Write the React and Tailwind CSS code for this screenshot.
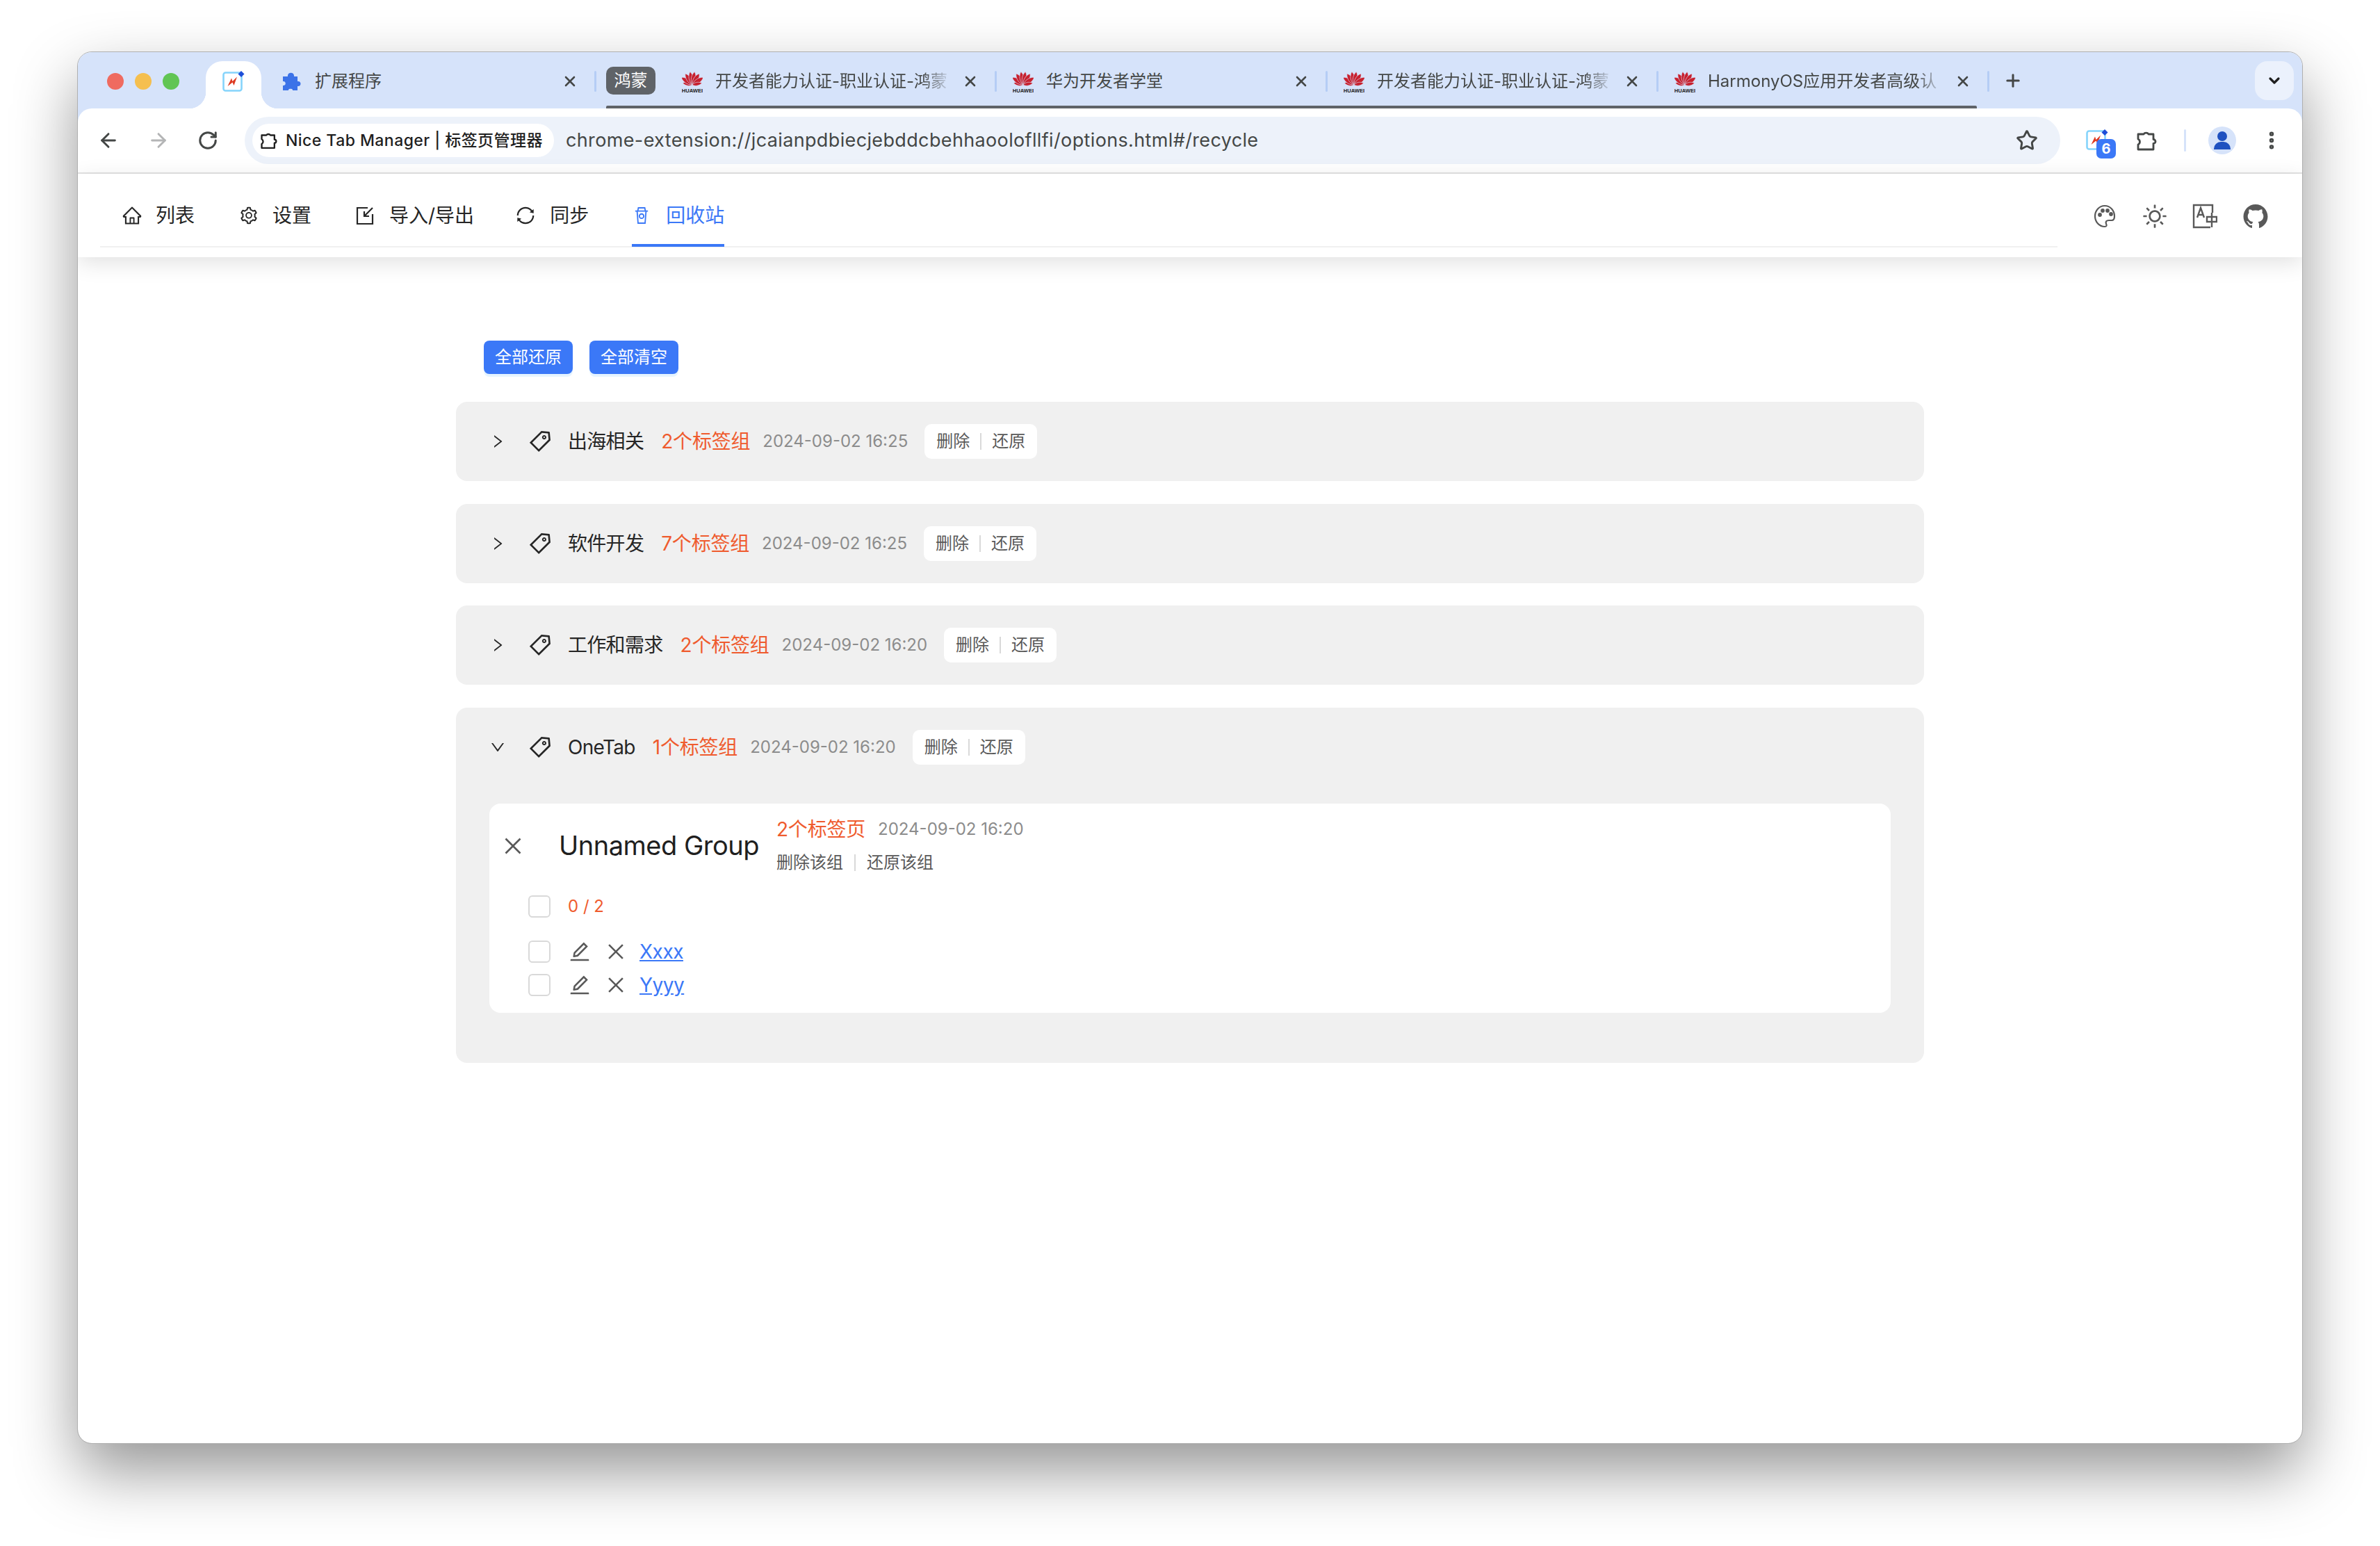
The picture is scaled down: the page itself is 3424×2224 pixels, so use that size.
import { ArrowLeft, ArrowRight, RotateCw, Star, EllipsisVertical, Plus, X, ChevronDown } from 'lucide-react';
import {
  AiOutlineHome,
  AiOutlineSetting,
  AiOutlineSync,
  AiOutlineTag,
  AiOutlineClose,
  AiOutlineEdit,
  AiOutlineRight,
  AiOutlineDown,
  AiOutlineSun,
  AiFillGithub,
} from 'react-icons/ai';

const petalLong = 'M15 21 C10.5 15 11 7 15 2 C19 7 19.5 15 15 21Z';
const petalShort = 'M15 21 C11.5 17 12 11 15 7 C18 11 18.5 17 15 21Z';

const HuaweiLogo = () => (
  <svg viewBox="0 0 30 32" className="w-[30px] h-[32px] shrink-0">
    {[
      [-80, petalShort],
      [-56, petalLong],
      [-32, petalLong],
      [-10, petalLong],
      [10, petalLong],
      [32, petalLong],
      [56, petalLong],
      [80, petalShort],
    ].map(([deg, d]) => (
      <path key={deg} d={d} fill="#c7202e" transform={`rotate(${deg} 15 21)`} stroke="#d6e3fa" strokeWidth="0.6" />
    ))}
    <text x="15" y="31.5" textAnchor="middle" fontSize="7.6" fontWeight="700" fill="#222" fontFamily="Liberation Sans">
      HUAWEI
    </text>
  </svg>
);

const ExtensionLogo = ({ className }) => (
  <svg viewBox="0 0 32 30" className={className}>
    <rect x="1.5" y="2.5" width="26" height="26" rx="3" fill="#fff" stroke="#85d4fb" strokeWidth="2.6" />
    <path d="M7.5 22 L13 10.5 L14.5 15 L21 8.5 L16.5 21 L14.5 16.5Z" fill="#dd3a22" />
    <path d="M27 0 L31.5 4.5 L27 9 L22.5 4.5Z" fill="#1d4ed8" />
  </svg>
);

const PuzzleIcon = ({ className, color = '#444746' }) => (
  <svg viewBox="0 0 30 32" fill="none" stroke={color} strokeWidth="2.8" className={className}>
    <path d="M3 7h8a4 3.5 0 0 1 7 0h7v7.5a3 3 0 0 1 0 6V29H3v-7a4.5 4.5 0 0 0 0-8V7Z" strokeLinejoin="round" />
  </svg>
);

const BrowserTab = ({ title, icon, fade = true }) => (
  <div className="relative w-[476px] h-[40px] mt-[22px] flex items-center shrink-0">
    <div className="w-[71px] pl-[23px] shrink-0 flex items-center">{icon}</div>
    <div
      className={`w-[340px] overflow-hidden whitespace-nowrap text-[24px] text-[#444746] ${
        fade ? '[mask-image:linear-gradient(to_right,black_88%,transparent)]' : ''
      }`}
    >
      {title}
    </div>
    <X className="absolute left-[426px] w-[24px] h-[24px] text-[#444746]" strokeWidth={2.6} />
    <span className="absolute right-0 w-[3px] h-[30px] rounded-full bg-[#b5cdf5]" />
  </div>
);

const NavItem = ({ icon, label, active, className = '' }) => (
  <div
    className={`relative h-full pt-[16px] flex items-center text-[28px] ${
      active ? 'text-[#3b78f7]' : 'text-[#262626]'
    } ${className}`}
  >
    {icon}
    <span>{label}</span>
  </div>
);

const ActionBox = () => (
  <div className="ml-[24px] w-[162px] h-[50px] rounded-[10px] bg-white flex items-center justify-center text-[24px] text-[#595959]">
    <span>删除</span>
    <span className="w-[2px] h-[24px] mx-[15px] bg-[#d9d9d9]" />
    <span>还原</span>
  </div>
);

const PanelHeader = ({ name, count, time, open }) => (
  <div className="h-[114px] flex items-center shrink-0">
    <div className="w-[103px] pl-[48px] flex items-center shrink-0">
      {open ? <AiOutlineDown className="text-[24px] text-[#262626]" /> : <AiOutlineRight className="text-[24px] text-[#262626]" />}
    </div>
    <AiOutlineTag className="text-[36px] text-[#262626] shrink-0" />
    <span className="ml-[22px] text-[28px] tracking-[-0.7px] text-[#262626]">{name}</span>
    <span className="ml-[25px] text-[28px] tracking-[-0.2px] text-[#ef5b2e]">{count}</span>
    <span className="ml-[18px] text-[24px] text-[#8c8c8c]">{time}</span>
    <ActionBox />
  </div>
);

const Checkbox = () => (
  <span className="w-[32px] h-[32px] rounded-[6px] border-2 border-[#d9d9d9] bg-white shrink-0" />
);

const TabRow = ({ label, className = '' }) => (
  <div className={`flex items-center h-[32px] pl-[56px] ${className}`}>
    <Checkbox />
    <AiOutlineEdit className="ml-[25px] text-[34px] text-[#595959] shrink-0" />
    <AiOutlineClose className="ml-[19px] text-[32px] text-[#595959] shrink-0" />
    <a className="ml-[18px] text-[28px] tracking-[-0.5px] text-[#3b78f7] underline">{label}</a>
  </div>
);

export default function App() {
  return (
    <div className="w-[3424px] h-[2224px] bg-white pt-[75px] pl-[112px] overflow-hidden font-['Inter','Noto_Sans_CJK_SC',sans-serif]">
      <div className="w-[3200px] h-[2001px] rounded-[20px] bg-white overflow-hidden outline outline-[1.5px] outline-[#b0b0b0] shadow-[0_40px_90px_rgba(0,0,0,0.42)] flex flex-col">
        {/* tab strip */}
        <div className="relative h-[81px] bg-[#d6e3fa] flex shrink-0">
          <div className="w-[184px] pl-[42px] pt-[30px] flex gap-[16px] shrink-0">
            <span className="w-[24px] h-[24px] rounded-full bg-[#ef6b60]" />
            <span className="w-[24px] h-[24px] rounded-full bg-[#f5bf4f]" />
            <span className="w-[24px] h-[24px] rounded-full bg-[#61c554]" />
          </div>
          <div className="relative w-[80px] h-[68px] mt-[13px] rounded-t-[24px] bg-white flex items-start justify-center pt-[14px] shrink-0">
            <ExtensionLogo className="w-[32px] h-[30px]" />
            <span className="absolute -left-[24px] bottom-0 w-[24px] h-[24px] bg-[radial-gradient(circle_at_0_0,transparent_24px,white_24.5px)]" />
            <span className="absolute -right-[24px] bottom-0 w-[24px] h-[24px] bg-[radial-gradient(circle_at_100%_0,transparent_24px,white_24.5px)]" />
          </div>
          <div className="w-[6px] shrink-0" />
          <BrowserTab
            title="扩展程序"
            fade={false}
            icon={
              <svg viewBox="0 0 28 30" className="w-[28px] h-[30px]" fill="#3b72e8">
                <path d="M2 8h7c-1-7 10-7 9 0h5v7c6-1 6 8 0 7v6h-7c1-3-7-3-6 0H2v-7c5 1 5-7 0-6V8Z" />
              </svg>
            }
          />
          <div className="ml-[14px] mr-[15px] mt-[21px] w-[71px] h-[40px] rounded-[10px] bg-[#5f6368] text-white text-[24px] flex items-center justify-center shrink-0">
            鸿蒙
          </div>
          <BrowserTab title="开发者能力认证-职业认证-鸿蒙" icon={<HuaweiLogo />} />
          <BrowserTab title="华为开发者学堂" fade={false} icon={<HuaweiLogo />} />
          <BrowserTab title="开发者能力认证-职业认证-鸿蒙" icon={<HuaweiLogo />} />
          <BrowserTab title="HarmonyOS应用开发者高级认" icon={<HuaweiLogo />} />
          <Plus className="ml-[20px] mt-[27px] w-[28px] h-[28px] text-[#444746] shrink-0" strokeWidth={2.6} />
          <div className="ml-[334px] mt-[13px] w-[56px] h-[56px] rounded-[18px] bg-[#ebf1fc] flex items-center justify-center shrink-0">
            <ChevronDown className="w-[24px] h-[24px] text-[#1f1f1f]" strokeWidth={3.2} />
          </div>
          {/* group underline */}
          <span className="absolute left-[760px] right-[468px] bottom-0 h-[4px] rounded-t-[2px] bg-[#5f6368]" />
        </div>

        {/* toolbar */}
        <div className="bg-[#d6e3fa] shrink-0">
          <div className="h-[94px] rounded-t-[20px] border-b-2 border-[#e3e3e3] flex items-center bg-white">
            <div className="w-[240px] pl-[28px] flex gap-[40px] items-center shrink-0">
              <ArrowLeft className="w-[32px] h-[32px] text-[#444746]" strokeWidth={2.2} />
              <ArrowRight className="w-[32px] h-[32px] text-[#b4b5b6]" strokeWidth={2.2} />
              <RotateCw className="w-[30px] h-[30px] text-[#444746]" strokeWidth={2.4} />
            </div>
            <div className="w-[2612px] h-[68px] rounded-full bg-[#edf2fa] flex items-center pl-[11px] pr-[32px] shrink-0">
              <div className="w-[434px] h-[48px] rounded-full bg-white flex items-center pl-[11px] shrink-0">
                <PuzzleIcon className="w-[25px] h-[28px]" color="#1f1f1f" />
                <span className="ml-[12px] text-[23px] font-medium tracking-[0.45px] text-[#1f1f1f] whitespace-nowrap">Nice Tab Manager | 标签页管理器</span>
              </div>
              <span className="ml-[17px] text-[27px] text-[#444746] whitespace-nowrap tracking-[0.36px]">
                chrome-extension://jcaianpdbiecjebddcbehhaoolofllfi/options.html#/recycle
              </span>
              <Star className="ml-auto w-[32px] h-[32px] text-[#444746]" strokeWidth={2.2} />
            </div>
            <div className="relative ml-[37px] w-[32px] h-[32px] shrink-0">
              <ExtensionLogo className="w-[32px] h-[30px]" />
              <span className="absolute left-[15px] top-[14px] w-[28px] h-[28px] rounded-[7px] bg-[#3b78f7] text-white text-[20px] font-bold flex items-center justify-center">
                6
              </span>
            </div>
            <PuzzleIcon className="ml-[40px] w-[30px] h-[32px] shrink-0" />
            <span className="ml-[39px] w-[3px] h-[32px] rounded-full bg-[#d6e3fa] shrink-0" />
            <div className="ml-[32px] w-[40px] h-[40px] rounded-full bg-[#d6e3fa] flex flex-col items-center justify-center shrink-0">
              <span className="w-[14px] h-[14px] rounded-full bg-[#1f51c0]" />
              <span className="mt-[1px] w-[24px] h-[11px] rounded-t-[10px] bg-[#1f51c0]" />
            </div>
            <EllipsisVertical className="ml-[35px] w-[32px] h-[32px] text-[#444746] shrink-0" strokeWidth={2.8} />
          </div>
        </div>

        {/* nav */}
        <div className="relative z-10 h-[120px] shrink-0 pl-[32px] pr-[32px] flex bg-white shadow-[0_8px_30px_rgba(0,0,0,0.12)]">
          <div className="w-[2816px] h-[106px] border-b-2 border-[#f0f0f0] flex shrink-0">
            <NavItem icon={<AiOutlineHome className="text-[30px] mr-[19px] ml-[31px]" />} label="列表" />
            <NavItem icon={<AiOutlineSetting className="text-[28px] mr-[20px] ml-[64px]" />} label="设置" />
            <NavItem
              icon={
                <svg viewBox="0 0 26 28" fill="none" stroke="currentColor" strokeWidth="2.2" className="w-[26px] h-[28px] mr-[22px] ml-[64px]">
                  <path d="M17 3H2v23h22V12" />
                  <path d="M24 3 12 15M12 8v7h7" />
                </svg>
              }
              label="导入/导出"
            />
            <NavItem icon={<AiOutlineSync className="text-[30px] mr-[20px] ml-[59px]" />} label="同步" />
            <NavItem
              active
              icon={
                <svg viewBox="0 0 24 28" fill="none" stroke="currentColor" strokeWidth="2" className="w-[22px] h-[28px] mr-[24px] ml-[65px]">
                  <path d="M6 7l1-5h10l1 5" />
                  <path d="M2 7h20M5 7l1.5 19h11L19 7" />
                  <circle cx="12" cy="15" r="3.5" />
                </svg>
              }
              label="回收站"
              className="after:absolute after:left-[62px] after:right-0 after:-bottom-[1px] after:h-[4px] after:bg-[#3b78f7]"
            />
          </div>
          <div className="ml-[52px] h-[106px] pt-[16px] flex items-center gap-[35px] text-[#595959] shrink-0">
            <svg viewBox="0 0 32 34" fill="none" stroke="currentColor" strokeWidth="2.2" className="w-[32px] h-[34px]">
              <path d="M16 2C8 2 2 9 2 17c0 8 6 15 14 15 3 0 3-2 2-4-1-3 0-5 4-5h4c3 0 4-3 4-6 0-8-6-15-14-15Z" />
              <circle cx="9" cy="15" r="1.8" fill="currentColor" />
              <circle cx="13" cy="9" r="1.8" fill="currentColor" />
              <circle cx="20" cy="9" r="1.8" fill="currentColor" />
              <circle cx="25" cy="14" r="1.8" fill="currentColor" />
            </svg>
            <AiOutlineSun className="ml-[2px] text-[38px]" />
            <svg viewBox="0 0 36 36" fill="none" stroke="currentColor" strokeWidth="2.4" className="w-[36px] h-[36px]">
              <path d="M29 13V2H2v32h24" />
              <path d="M7 20 12 6l5 14M9 16h6" />
              <path d="M21 19h14v7H21zM28 13v21" />
            </svg>
            <AiFillGithub className="text-[40px]" />
          </div>
        </div>

        {/* content */}
        <div className="flex-1 pt-[120px] pl-[544px] text-[#262626]">
          <div className="flex gap-[24px] pl-[40px]">
            <button className="w-[128px] h-[48px] rounded-[8px] bg-[#3b78f7] text-white text-[24px] shadow-[0_4px_0_rgba(5,145,255,0.1)]">全部还原</button>
            <button className="w-[128px] h-[48px] rounded-[8px] bg-[#3b78f7] text-white text-[24px] shadow-[0_4px_0_rgba(5,145,255,0.1)]">全部清空</button>
          </div>
          <div className="mt-[40px] w-[2112px] flex flex-col gap-[32.5px]">
            <div className="rounded-[16px] bg-[#f0f0f0]">
              <PanelHeader name="出海相关" count="2个标签组" time="2024-09-02 16:25" />
            </div>
            <div className="rounded-[16px] bg-[#f0f0f0]">
              <PanelHeader name="软件开发" count="7个标签组" time="2024-09-02 16:25" />
            </div>
            <div className="rounded-[16px] bg-[#f0f0f0]">
              <PanelHeader name="工作和需求" count="2个标签组" time="2024-09-02 16:20" />
            </div>
            <div className="rounded-[16px] bg-[#f0f0f0] pb-[72px]">
              <PanelHeader name="OneTab" count="1个标签组" time="2024-09-02 16:20" open />
              <div className="mt-[24px] mx-[48px] rounded-[16px] bg-white pt-[20px] pb-[24px]">
                <div className="h-[82px] flex items-center">
                  <AiOutlineClose className="ml-[17px] text-[34px] text-[#595959] shrink-0" />
                  <span className="ml-[49px] text-[38px] tracking-[-0.5px] text-[#1f1f1f] whitespace-nowrap">Unnamed Group</span>
                  <div className="ml-[25px] flex flex-col">
                    <div className="flex items-center h-[36px]">
                      <span className="text-[28px] tracking-[-0.2px] text-[#ef5b2e]">2个标签页</span>
                      <span className="ml-[18px] text-[24px] text-[#8c8c8c]">2024-09-02 16:20</span>
                    </div>
                    <div className="flex items-center h-[36px] mt-[12px] text-[24px] text-[#595959]">
                      <span>删除该组</span>
                      <span className="w-[2px] h-[24px] mx-[16px] bg-[#d9d9d9]" />
                      <span>还原该组</span>
                    </div>
                  </div>
                </div>
                <div className="mt-[30px] flex items-center h-[32px] pl-[56px]">
                  <Checkbox />
                  <span className="ml-[25px] text-[24px] text-[#ef5b2e]">0 / 2</span>
                </div>
                <TabRow label="Xxxx" className="mt-[33px]" />
                <TabRow label="Yyyy" className="mt-[16px]" />
              </div>
            </div>
          </div>
        </div>
      </div>
    </div>
  );
}
